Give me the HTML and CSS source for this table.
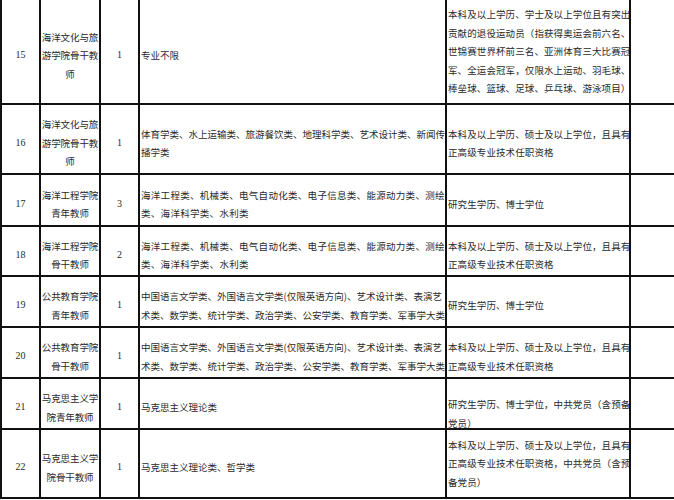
FILE: index.html
```html
<!DOCTYPE html>
<html lang="zh-CN">
<head>
<meta charset="utf-8">
<title>招聘岗位表</title>
<link rel="stylesheet" href="styles.css">
</head>
<body>
<div class="sheet">
  <div class="c num">15</div>
  <div class="c unit">海洋文化与旅<br>游学院骨干教<br>师</div>
  <div class="c num">1</div>
  <div class="c major">专业不限</div>
  <div class="c req req-flat">本科及以上学历、学士及以上学位且有突出<br>贡献的退役运动员（指获得奥运会前六名、<br>世锦赛世界杯前三名、亚洲体育三大比赛冠<br>军、全运会冠军，仅限水上运动、羽毛球、<br>棒垒球、篮球、足球、乒乓球、游泳项目）</div>
  <div class="c note"></div>

  <div class="c num">16</div>
  <div class="c unit">海洋文化与旅<br>游学院骨干教<br>师</div>
  <div class="c num">1</div>
  <div class="c major">体育学类、水上运输类、旅游餐饮类、地理科学类、艺术设计类、新闻传<br>播学类</div>
  <div class="c req">本科及以上学历、硕士及以上学位，且具有<br>正高级专业技术任职资格</div>
  <div class="c note"></div>

  <div class="c num">17</div>
  <div class="c unit">海洋工程学院<br>青年教师</div>
  <div class="c num">3</div>
  <div class="c major major-wide">海洋工程类、机械类、电气自动化类、电子信息类、能源动力类、测绘<br>类、海洋科学类、水利类</div>
  <div class="c req">研究生学历、博士学位</div>
  <div class="c note"></div>

  <div class="c num">18</div>
  <div class="c unit">海洋工程学院<br>骨干教师</div>
  <div class="c num">2</div>
  <div class="c major major-wide">海洋工程类、机械类、电气自动化类、电子信息类、能源动力类、测绘<br>类、海洋科学类、水利类</div>
  <div class="c req">本科及以上学历、硕士及以上学位，且具有<br>正高级专业技术任职资格</div>
  <div class="c note"></div>

  <div class="c num">19</div>
  <div class="c unit">公共教育学院<br>青年教师</div>
  <div class="c num">1</div>
  <div class="c major">中国语言文学类、外国语言文学类(仅限英语方向)、艺术设计类、表演艺<br>术类、数学类、统计学类、政治学类、公安学类、教育学类、军事学大类</div>
  <div class="c req">研究生学历、博士学位</div>
  <div class="c note"></div>

  <div class="c num">20</div>
  <div class="c unit">公共教育学院<br>骨干教师</div>
  <div class="c num">1</div>
  <div class="c major">中国语言文学类、外国语言文学类(仅限英语方向)、艺术设计类、表演艺<br>术类、数学类、统计学类、政治学类、公安学类、教育学类、军事学大类</div>
  <div class="c req">本科及以上学历、硕士及以上学位，且具有<br>正高级专业技术任职资格</div>
  <div class="c note"></div>

  <div class="c num">21</div>
  <div class="c unit">马克思主义学<br>院青年教师</div>
  <div class="c num">1</div>
  <div class="c major">马克思主义理论类</div>
  <div class="c req req-low">研究生学历、博士学位，中共党员（含预备<br>党员）</div>
  <div class="c note"></div>

  <div class="c num">22</div>
  <div class="c unit">马克思主义学<br>院骨干教师</div>
  <div class="c num">1</div>
  <div class="c major">马克思主义理论类、哲学类</div>
  <div class="c req req-flat">本科及以上学历、硕士及以上学位，且具有<br>正高级专业技术任职资格，中共党员（含预<br>备党员）</div>
  <div class="c note"></div>
</div>
</body>
</html>
```
FILE: styles.css
```css
html, body {
  margin: 0;
  padding: 0;
  background: #ffffff;
  overflow: hidden;
}

body {
  width: 674px;
  height: 500px;
  font-family: "Noto Sans CJK SC", "Noto Sans", sans-serif;
  color: #2a2a2a;
}

.sheet {
  display: grid;
  grid-template-columns: 39px 60px 39px 307px 184px 69px;
  grid-template-rows: 105px 70px 52px 50px 51px 51px 51px 69px;
  width: 700px;
  border-left: 2px solid #111111;
}

.c {
  box-sizing: border-box;
  border-right: 2px solid #111111;
  border-bottom: 2px solid #111111;
  display: flex;
  align-items: center;
  padding-top: 8px;
  overflow: hidden;
  white-space: nowrap;
  font-size: 9.5px;
  line-height: 18.5px;
  letter-spacing: 0.1px;
}

.num {
  justify-content: center;
  font-family: "Liberation Serif", "DejaVu Serif", serif;
  font-size: 10px;
  letter-spacing: 0;
}

.unit {
  justify-content: center;
  text-align: center;
  letter-spacing: -0.1px;
}

.major {
  padding-left: 1px;
  letter-spacing: 0;
}

.major-wide {
  letter-spacing: 0.3px;
}

.req {
  padding-left: 1px;
  letter-spacing: 0.1px;
}

.req-flat {
  padding-top: 0;
}

.req-low {
  padding-top: 20px;
}
```
